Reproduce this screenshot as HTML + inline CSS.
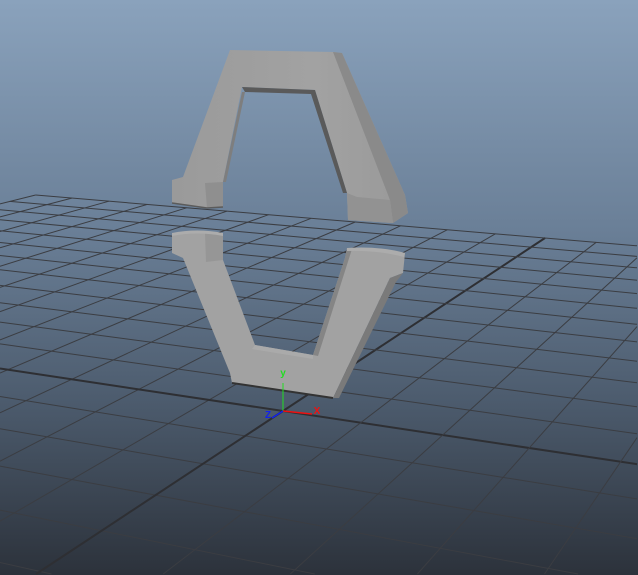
<!DOCTYPE html>
<html><head><meta charset="utf-8"><style>
html,body{margin:0;padding:0;width:638px;height:575px;overflow:hidden;position:relative}
svg{display:block;position:absolute;left:0;top:0;overflow:hidden}
</style></head><body>
<svg id="s" width="638" height="575" viewBox="0 0 638 575" xmlns="http://www.w3.org/2000/svg">
<defs>
<linearGradient id="bg" x1="0" y1="0" x2="0" y2="1">
<stop offset="0" stop-color="#8aa2bc"/>
<stop offset="0.4" stop-color="#6a7f97"/>
<stop offset="0.7" stop-color="#4c5b6d"/>
<stop offset="1" stop-color="#2c323b"/>
</linearGradient>
<linearGradient id="arch" x1="0" y1="0" x2="1" y2="0">
<stop offset="0" stop-color="#9a9a9a"/>
<stop offset="0.6" stop-color="#a2a2a2"/>
<stop offset="1" stop-color="#999"/>
</linearGradient>
</defs>
<rect width="638" height="575" fill="url(#bg)"/>
<g id="grid"></g>

<path d="M230,50 L333,52 L342,53 L405,195 L408,213 L393,223 L348,220 L347,193 L315,90 L242,87 L223,182 L223,207 L207,208 L172,203 L172,180 L183,177 Z" fill="url(#arch)"/>
<path d="M333,52 L342,53 L405,195 L408,213 L393,223 L390,200 Z" fill="#8a8a8a"/>
<path d="M242,87 L315,90 L347,193 L343,193 L311,94 L245,92 Z" fill="#5a5a5a"/>
<path d="M245,92 L242,92 L223,182 L226,182 Z" fill="#7e7e7e"/>
<path d="M207,208 L223,207 L223,182 L205,183 Z" fill="#8f8f8f"/>
<path d="M347,193 L348,220 L393,223 L390,200 L357,197 Z" fill="#929292"/>
<path d="M172,203 L207,208 L223,207" fill="none" stroke="#5b5b5b" stroke-width="1.5"/>

<path d="M172,233 L223,233 L223,260 L255,345 L313,355 L345,258 L347,248 L405,253 L403,273 L390,278 L333,398 L232,383 L230,373 L183,258 L172,253 Z" fill="#a2a2a2"/>
<path d="M390,278 L403,273 L396,282 L339,398 L333,398 Z" fill="#7a7a7a"/>
<path d="M223,260 L223,233 L205,233 L206,262 Z" fill="#969696"/>
<path d="M313,355 L345,258 L347,248 L352,249 L318,356 Z" fill="#858585"/>
<path d="M255,345 L313,355 L313,359 L252,349 Z" fill="#aaaaaa"/>
<path d="M172,233 Q197,228 223,233 L223,236 Q197,231 172,236 Z" fill="#acacac"/>
<path d="M347,248 Q380,246 405,253 L404,257 Q378,250 347,251 Z" fill="#acacac"/>
<path d="M232,383 L333,398" fill="none" stroke="#333" stroke-width="2"/>

<line x1="283" y1="411" x2="283" y2="383" stroke="#22dd22" stroke-width="1"/>
<line x1="283" y1="411" x2="312" y2="414" stroke="#ee1111" stroke-width="1.5"/>
<line x1="283" y1="411" x2="272" y2="418" stroke="#1122ee" stroke-width="1.5"/>
<text x="283" y="376" fill="#22dd22" font-family="Liberation Sans, sans-serif" font-size="10" font-weight="bold" text-anchor="middle">y</text>
<text x="317" y="414" fill="#ee1111" font-family="Liberation Sans, sans-serif" font-size="10" font-weight="bold" text-anchor="middle">X</text>
<text x="268" y="418" fill="#1122ee" font-family="Liberation Sans, sans-serif" font-size="10" font-weight="bold" text-anchor="middle">Z</text>
</svg>
<script>
(function(){
var Vx=[-2679,-34],Vz=[957,-34],O=[283,411],r=-0.307,s=0.636;
function P(u,v){var d=r*u+s*v+1;return [(r*u*Vx[0]+s*v*Vz[0]+O[0])/d,(r*u*Vx[1]+s*v*Vz[1]+O[1])/d];}
function clip(a,b){
 var x0=a[0],y0=a[1],dx=b[0]-x0,dy=b[1]-y0,t0=0,t1=1;
 var p=[-dx,dx,-dy,dy],q=[x0,637-x0,y0,574-y0];
 for(var k=0;k<4;k++){
  if(p[k]==0){if(q[k]<0)return null;}
  else{var t=q[k]/p[k];if(p[k]<0){if(t>t1)return null;if(t>t0)t0=t;}else{if(t<t0)return null;if(t<t1)t1=t;}}
 }
 return [x0+t0*dx,y0+t0*dy,x0+t1*dx,y0+t1*dy];
}
var g=document.getElementById('grid'),h='';
function add(a,b,c,w){var l=clip(a,b);if(!l)return;
 h+='<line x1="'+l[0].toFixed(1)+'" y1="'+l[1].toFixed(1)+'" x2="'+l[2].toFixed(1)+'" y2="'+l[3].toFixed(1)+'" stroke="'+c+'" stroke-width="'+w+'"/>';}
for(var i=-12;i<=12;i++){
 var t=i/12,w=(i==0)?2:1,c=(i==0)?'#2e2f33':'#3b3d42';
 add(P(t,-1),P(t,1),c,w);
 add(P(-1,t),P(1,t),c,w);
}
g.innerHTML=h;
})();
</script>
</body></html>
